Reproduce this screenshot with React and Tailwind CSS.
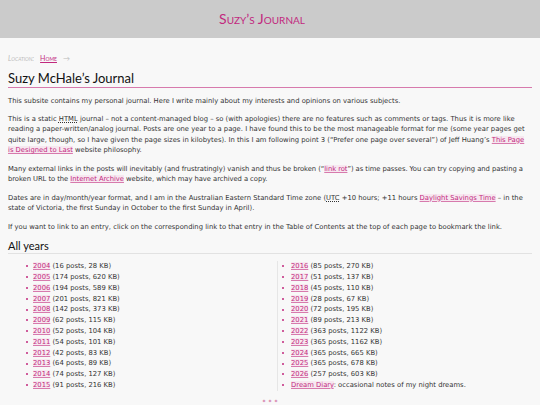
import React from "react";

const years = [
  ["2004", "16 posts, 28 KB"],
  ["2005", "174 posts, 620 KB"],
  ["2006", "194 posts, 589 KB"],
  ["2007", "201 posts, 821 KB"],
  ["2008", "142 posts, 373 KB"],
  ["2009", "62 posts, 115 KB"],
  ["2010", "52 posts, 104 KB"],
  ["2011", "54 posts, 101 KB"],
  ["2012", "42 posts, 83 KB"],
  ["2013", "64 posts, 89 KB"],
  ["2014", "74 posts, 127 KB"],
  ["2015", "91 posts, 216 KB"],
];

const years2 = [
  ["2016", "85 posts, 270 KB"],
  ["2017", "51 posts, 137 KB"],
  ["2018", "45 posts, 110 KB"],
  ["2019", "28 posts, 67 KB"],
  ["2020", "72 posts, 195 KB"],
  ["2021", "89 posts, 213 KB"],
  ["2022", "363 posts, 1122 KB"],
  ["2023", "365 posts, 1162 KB"],
  ["2024", "365 posts, 665 KB"],
  ["2025", "365 posts, 678 KB"],
  ["2026", "257 posts, 603 KB"],
];

const A = ({ children }) => (
  <a className="text-[#c2287e] bg-[#f7e8f0] underline decoration-[#d77aad] underline-offset-1">
    {children}
  </a>
);

const Abbr = ({ children }) => (
  <span className="underline decoration-dotted underline-offset-1">{children}</span>
);

const Item = ({ year, info, wide, children }) => (
  <li className="flex items-center h-[10.8px]">
    <span
      className={
        "w-[2px] h-[2px] rounded-full bg-[#c2287e] " + (wide ? "mr-[7px]" : "mr-[5px]")
      }
    ></span>
    <span>
      <A>{year}</A>
      {info ? ` (${info})` : null}
      {children}
    </span>
  </li>
);

export default function App() {
  return (
    <div className="min-h-[405px] bg-[#f8f8f8] text-[#333] font-['DejaVu_Sans',sans-serif] text-[6.8px] leading-[10.5px]">
      <header className="h-[38px] bg-[#cbcbcb] flex items-center justify-center pr-[16px]">
        <h1 className="font-['Lato',sans-serif] text-[14px] text-[#c2287e] [font-variant:small-caps] leading-none">
          Suzy’s Journal
        </h1>
      </header>

      <div className="px-2">
        <nav className="mt-[15px] h-[10px] flex items-center gap-[6px] font-['Lato',sans-serif] text-[7px] [font-variant:small-caps]">
          <span className="italic text-[#bbb]">Location:</span>
          <a className="text-[#c2287e] underline">Home</a>
          <span className="text-[#bbb]">→</span>
        </nav>

        <h2 className="mt-[7px] font-['Lato',sans-serif] text-[13px] leading-[16px] text-[#111] border-b border-[#d77aad] pb-[1px]">
          Suzy McHale’s Journal
        </h2>

        <p className="mt-[8px]">
          This subsite contains my personal journal. Here I write mainly about my interests and opinions on various subjects.
        </p>
        <p className="mt-[7px]">
          This is a static <Abbr>HTML</Abbr> journal – not a content-managed blog – so (with apologies) there are no features such as comments or tags. Thus it is more like reading a paper-written/analog journal. Posts are one year to a page. I have found this to be the most manageable format for me (some year pages get quite large, though, so I have given the page sizes in kilobytes). In this I am following point 3 (“Prefer one page over several”) of Jeff Huang’s <A>This Page is&nbsp;Designed to Last</A> website philosophy.
        </p>
        <p className="mt-[8px] tracking-[-0.06px]">
          Many external links in the posts will inevitably (and frustratingly) vanish and thus be broken (“<A>link rot</A>”) as time passes. You can try copying and pasting a broken URL to the <A>Internet Archive</A> website, which may have archived a copy.
        </p>
        <p className="mt-[8px]">
          Dates are in day/month/year format, and I am in the Australian Eastern Standard Time zone (<Abbr>UTC</Abbr> +10 hours; +11 hours <A>Daylight Savings Time</A> – in the state of Victoria, the first Sunday in October to the first Sunday in April).
        </p>
        <p className="mt-[8px]">
          If you want to link to an entry, click on the corresponding link to that entry in the Table of Contents at the top of each page to bookmark the link.
        </p>

        <h3 className="mt-[8px] font-['Lato',sans-serif] text-[11px] leading-[12px] text-[#111] border-b border-[#e2e2e2] pb-[1px]">
          All years
        </h3>

        <div className="flex mt-[7px]">
          <ul className="w-[269px] pl-[18px]">
            {years.map(([y, i]) => (
              <Item key={y} year={y} info={i} />
            ))}
          </ul>
          <ul className="flex-1 border-l border-[#e6e6e6] pl-[4px]">
            {years2.map(([y, i]) => (
              <Item key={y} year={y} info={i} wide />
            ))}
            <Item year="Dream Diary" wide>
              : occasional notes of my night dreams.
            </Item>
          </ul>
        </div>

        <div className="mt-[7px] flex justify-center gap-[3px] text-[#c2287e] text-[6px] leading-[8px]">
          <span>*</span>
          <span>*</span>
          <span>*</span>
        </div>
      </div>
    </div>
  );
}
